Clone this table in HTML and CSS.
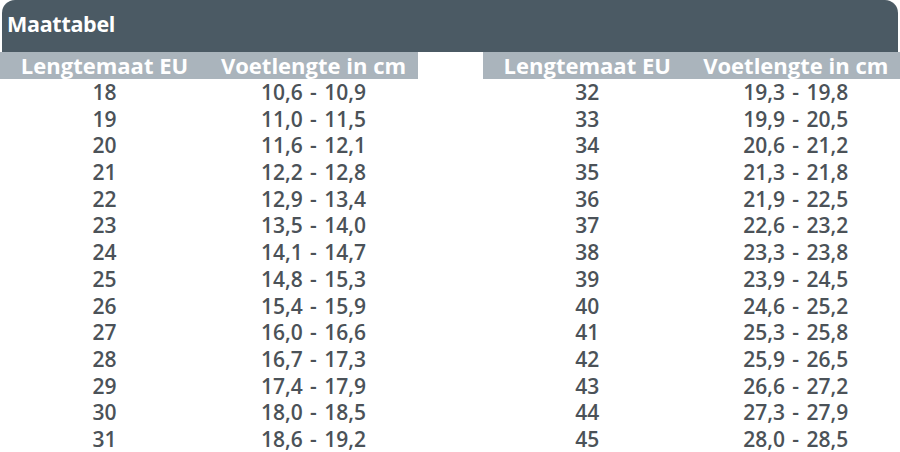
FILE: index.html
```html
<!DOCTYPE html>
<html lang="nl">
<head>
<meta charset="utf-8">
<title>Maattabel</title>
<link rel="stylesheet" href="styles.css">
</head>
<body>
<div class="page">
  <div class="title-bar">Maattabel</div>
  <div class="tables">
    <div class="size-table">
      <div class="head">Lengtemaat EU</div><div class="head">Voetlengte in cm</div>
      <div class="cell">18</div><div class="cell">10,6 - 10,9</div>
      <div class="cell">19</div><div class="cell">11,0 - 11,5</div>
      <div class="cell">20</div><div class="cell">11,6 - 12,1</div>
      <div class="cell">21</div><div class="cell">12,2 - 12,8</div>
      <div class="cell">22</div><div class="cell">12,9 - 13,4</div>
      <div class="cell">23</div><div class="cell">13,5 - 14,0</div>
      <div class="cell">24</div><div class="cell">14,1 - 14,7</div>
      <div class="cell">25</div><div class="cell">14,8 - 15,3</div>
      <div class="cell">26</div><div class="cell">15,4 - 15,9</div>
      <div class="cell">27</div><div class="cell">16,0 - 16,6</div>
      <div class="cell">28</div><div class="cell">16,7 - 17,3</div>
      <div class="cell">29</div><div class="cell">17,4 - 17,9</div>
      <div class="cell">30</div><div class="cell">18,0 - 18,5</div>
      <div class="cell">31</div><div class="cell">18,6 - 19,2</div>
    </div>
    <div class="size-table">
      <div class="head">Lengtemaat EU</div><div class="head">Voetlengte in cm</div>
      <div class="cell">32</div><div class="cell">19,3 - 19,8</div>
      <div class="cell">33</div><div class="cell">19,9 - 20,5</div>
      <div class="cell">34</div><div class="cell">20,6 - 21,2</div>
      <div class="cell">35</div><div class="cell">21,3 - 21,8</div>
      <div class="cell">36</div><div class="cell">21,9 - 22,5</div>
      <div class="cell">37</div><div class="cell">22,6 - 23,2</div>
      <div class="cell">38</div><div class="cell">23,3 - 23,8</div>
      <div class="cell">39</div><div class="cell">23,9 - 24,5</div>
      <div class="cell">40</div><div class="cell">24,6 - 25,2</div>
      <div class="cell">41</div><div class="cell">25,3 - 25,8</div>
      <div class="cell">42</div><div class="cell">25,9 - 26,5</div>
      <div class="cell">43</div><div class="cell">26,6 - 27,2</div>
      <div class="cell">44</div><div class="cell">27,3 - 27,9</div>
      <div class="cell">45</div><div class="cell">28,0 - 28,5</div>
    </div>
  </div>
</div>
</body>
</html>
```

FILE: styles.css
```css
html, body {
  margin: 0;
  padding: 0;
  background: #ffffff;
}

.page {
  width: 900px;
  height: 452px;
  overflow: hidden;
  font-family: "Open Sans", "Liberation Sans", sans-serif;
}

.title-bar {
  height: 52px;
  margin: 0 2px 0 2px;
  box-sizing: border-box;
  padding: 10px 0 0 5px;
  background: #4b5a64;
  border-radius: 13px 13px 0 0;
  color: #ffffff;
  font-weight: 700;
  font-size: 21.5px;
  line-height: 28px;
  letter-spacing: -0.3px;
}

.tables {
  display: grid;
  grid-template-columns: 418px 417px;
  column-gap: 65px;
}

.size-table {
  display: grid;
  grid-template-columns: 1fr 1fr;
  grid-template-rows: 27px repeat(14, 26.7px);
}

.head {
  background: #aab4bc;
  color: #ffffff;
  font-weight: 700;
  font-size: 22px;
  line-height: 27px;
  letter-spacing: 0;
  text-align: center;
  white-space: nowrap;
}

.cell {
  color: #4b5258;
  font-weight: 600;
  font-size: 21px;
  line-height: 26.7px;
  word-spacing: 2px;
  text-align: center;
  white-space: nowrap;
}
```
